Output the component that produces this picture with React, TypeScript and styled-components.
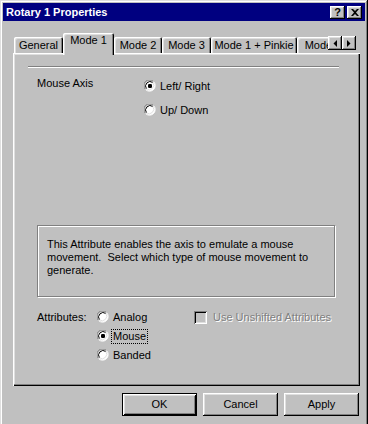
import React from "react";
import styled, { createGlobalStyle } from "styled-components";

const GlobalStyle = createGlobalStyle`
  html, body { margin: 0; padding: 0; background: #c0c0c0; }
  body {
    font-family: "Liberation Sans", Arial, sans-serif;
    font-size: 11px;
    color: #000;
  }
`;

const Window = styled.div`
  box-sizing: border-box;
  width: 368px;
  height: 424px;
  background: #c0c0c0;
  padding: 3px 3px 0 3px;
  box-shadow: inset -1px 0 #000, inset 1px 1px #dfdfdf, inset -2px 0 #808080,
    inset 2px 2px #fff;
  display: flex;
  flex-direction: column;
  overflow: hidden;
`;

const TitleBar = styled.div`
  height: 18px;
  background: #000080;
  display: flex;
  align-items: center;
  justify-content: space-between;
  padding: 0 3px 0 3px;
`;

const TitleText = styled.span`
  color: #fff;
  font-weight: bold;
  font-size: 11px;
  line-height: 13px;
`;

const CaptionButtons = styled.div`
  display: flex;
  gap: 2px;
`;

const CaptionButton = styled.div`
  box-sizing: border-box;
  width: 15px;
  height: 13px;
  background: #c0c0c0;
  box-shadow: inset -1px -1px #000, inset 1px 1px #fff, inset -2px -2px #808080,
    inset 2px 2px #dfdfdf;
  display: flex;
  align-items: center;
  justify-content: center;
  font-weight: bold;
  font-size: 11px;
  line-height: 11px;
  color: #000;
`;

const Body = styled.div`
  display: flex;
  flex-direction: column;
  padding: 12px 5px 0 10px;
`;

const TabArea = styled.div`
  position: relative;
  z-index: 1;
  height: 22px;
`;

const TabClip = styled.div`
  width: 315px;
  height: 22px;
  overflow: hidden;
  display: flex;
  align-items: flex-end;
  padding-left: 1px;
  box-sizing: border-box;
`;

const Tab = styled.div<{ $w: number; $active?: boolean }>`
  flex: none;
  box-sizing: border-box;
  width: ${(p) => p.$w}px;
  height: ${(p) => (p.$active ? 22 : 16)}px;
  margin-bottom: ${(p) => (p.$active ? 0 : 2)}px;
  background: #c0c0c0;
  text-align: center;
  white-space: nowrap;
  line-height: 13px;
  padding-top: ${(p) => (p.$active ? 1 : 2)}px;
  border-top-left-radius: 2px;
  border-top-right-radius: 2px;
  box-shadow: inset 1px 1px #fff, inset -1px 0 #000, inset -2px 0 #808080,
    inset 2px 2px #dfdfdf;
`;

const Scroller = styled.div`
  position: absolute;
  left: 315px;
  top: 3px;
  display: flex;
`;

const ScrollButton = styled.div`
  box-sizing: border-box;
  width: 14px;
  height: 14px;
  background: #c0c0c0;
  box-shadow: inset -1px -1px #000, inset 1px 1px #fff, inset -2px -2px #808080,
    inset 2px 2px #dfdfdf;
  display: flex;
  align-items: center;
  justify-content: center;
`;

const Panel = styled.div`
  box-sizing: border-box;
  width: 347px;
  height: 333px;
  margin-top: -2px;
  background: #c0c0c0;
  box-shadow: inset 1px 1px #fff, inset -1px -1px #000, inset -2px -2px #808080,
    inset 2px 2px #dfdfdf;
  padding: 13px 21px 0 15px;
  display: flex;
  flex-direction: column;
`;

const Separator = styled.div`
  height: 0;
  border-top: 1px solid #808080;
  border-bottom: 1px solid #fff;
`;

const AxisGroup = styled.div`
  display: grid;
  grid-template-columns: 107px auto;
  margin: 10px 0 0 9px;
`;

const FieldLabel = styled.div<{ $shift?: number }>`
  line-height: 13px;
  margin-top: ${(p) => p.$shift ?? 0}px;
  align-self: start;
`;

const RadioList = styled.div<{ $gap: number }>`
  display: flex;
  flex-direction: column;
  gap: ${(p) => p.$gap}px;
`;

const Row = styled.div`
  display: flex;
  align-items: center;
  height: 16px;
  gap: 2px;
`;

const OptionText = styled.span<{ $focus?: boolean }>`
  line-height: 13px;
  padding: 0 1px;
  border: 1px ${(p) => (p.$focus ? "dotted #000" : "solid transparent")};
`;

const DescBox = styled.div`
  box-sizing: border-box;
  width: 298px;
  height: 72px;
  margin: 107px 0 0 9px;
  border: 1px solid #808080;
  box-shadow: inset 1px 1px #fff, 1px 1px #fff;
  padding: 12px 8px 0 9px;
  line-height: 13px;
  white-space: pre;
`;

const AttrGroup = styled.div`
  display: grid;
  grid-template-columns: 60px 97px auto;
  margin: 12px 0 0 9px;
`;

const AttrLabel = styled.div`
  height: 16px;
  line-height: 16px;
`;

const CheckRow = styled.div`
  display: flex;
  align-items: center;
  height: 16px;
  gap: 6px;
  align-self: start;
`;

const CheckBox = styled.div`
  box-sizing: border-box;
  width: 13px;
  height: 13px;
  background: #c0c0c0;
  box-shadow: inset 1px 1px #808080, inset -1px -1px #fff, inset 2px 2px #000,
    inset -2px -2px #dfdfdf;
`;

const DisabledText = styled.span`
  color: #808080;
  text-shadow: 1px 1px #fff;
  line-height: 13px;
`;

const ButtonRow = styled.div`
  display: flex;
  justify-content: flex-end;
  gap: 6px;
  margin-top: 7px;
  padding-right: 1px;
`;

const Button = styled.div<{ $default?: boolean }>`
  box-sizing: border-box;
  width: 75px;
  height: 23px;
  background: #c0c0c0;
  display: flex;
  align-items: center;
  justify-content: center;
  line-height: 13px;
  box-shadow: ${(p) =>
    p.$default
      ? "inset 0 0 0 1px #000, inset 2px 2px #fff, inset -2px -2px #000, inset 3px 3px #dfdfdf, inset -3px -3px #808080"
      : "inset -1px -1px #000, inset 1px 1px #fff, inset -2px -2px #808080, inset 2px 2px #dfdfdf"};
`;

const Radio = ({ checked }: { checked?: boolean }) => (
  <svg width="12" height="12" viewBox="0 0 12 12" style={{ flex: "none" }}>
    <circle cx="6" cy="6" r="5" fill="#fff" />
    <path d="M1.5 9.5 A5.5 5.5 0 0 1 9.5 1.5" fill="none" stroke="#808080" strokeWidth="1" />
    <path d="M9.5 1.5 A5.5 5.5 0 0 1 1.5 9.5" fill="none" stroke="#fff" strokeWidth="1" />
    <path d="M2.5 8.8 A4.5 4.5 0 0 1 8.8 2.5" fill="none" stroke="#000" strokeWidth="1" />
    <path d="M8.8 2.5 A4.5 4.5 0 0 1 2.5 8.8" fill="none" stroke="#dfdfdf" strokeWidth="1" />
    {checked && <rect x="4" y="4" width="4" height="4" rx="1.2" fill="#000" />}
  </svg>
);

const tabs: { label: string; w: number; active?: boolean }[] = [
  { label: "General", w: 49 },
  { label: "Mode 1", w: 51, active: true },
  { label: "Mode 2", w: 48 },
  { label: "Mode 3", w: 49 },
  { label: "Mode 1 + Pinkie", w: 86 },
  { label: "Mode 4", w: 52 },
];

export default function App() {
  return (
    <>
      <GlobalStyle />
      <Window>
        <TitleBar>
          <TitleText>Rotary 1 Properties</TitleText>
          <CaptionButtons>
            <CaptionButton>?</CaptionButton>
            <CaptionButton>
              <svg width="8" height="7" viewBox="0 0 8 7">
                <path
                  d="M0 0h2l2 2 2-2h2L5 3.5 8 7H6L4 5 2 7H0l3-3.5z"
                  fill="#000"
                />
              </svg>
            </CaptionButton>
          </CaptionButtons>
        </TitleBar>
        <Body>
          <TabArea>
            <TabClip>
              {tabs.map((t) => (
                <Tab key={t.label} $w={t.w} $active={t.active}>
                  {t.label}
                </Tab>
              ))}
            </TabClip>
            <Scroller>
              <ScrollButton>
                <svg width="4" height="7" viewBox="0 0 4 7">
                  <path d="M4 0v7L0.5 3.5z" fill="#000" />
                </svg>
              </ScrollButton>
              <ScrollButton>
                <svg width="4" height="7" viewBox="0 0 4 7">
                  <path d="M0 0v7l3.5-3.5z" fill="#000" />
                </svg>
              </ScrollButton>
            </Scroller>
          </TabArea>
          <Panel>
            <Separator />
            <AxisGroup>
              <FieldLabel $shift={-1}>Mouse Axis</FieldLabel>
              <RadioList $gap={8}>
                <Row>
                  <Radio checked />
                  <OptionText>Left/ Right</OptionText>
                </Row>
                <Row>
                  <Radio />
                  <OptionText>Up/ Down</OptionText>
                </Row>
              </RadioList>
            </AxisGroup>
            <DescBox>
              {"This Attribute enables the axis to emulate a mouse\nmovement.  Select which type of mouse movement to\ngenerate."}
            </DescBox>
            <AttrGroup>
              <AttrLabel>Attributes:</AttrLabel>
              <RadioList $gap={3}>
                <Row>
                  <Radio />
                  <OptionText>Analog</OptionText>
                </Row>
                <Row>
                  <Radio checked />
                  <OptionText $focus>Mouse</OptionText>
                </Row>
                <Row>
                  <Radio />
                  <OptionText>Banded</OptionText>
                </Row>
              </RadioList>
              <CheckRow>
                <CheckBox />
                <DisabledText>Use Unshifted Attributes</DisabledText>
              </CheckRow>
            </AttrGroup>
          </Panel>
          <ButtonRow>
            <Button $default>OK</Button>
            <Button>Cancel</Button>
            <Button>Apply</Button>
          </ButtonRow>
        </Body>
      </Window>
    </>
  );
}
